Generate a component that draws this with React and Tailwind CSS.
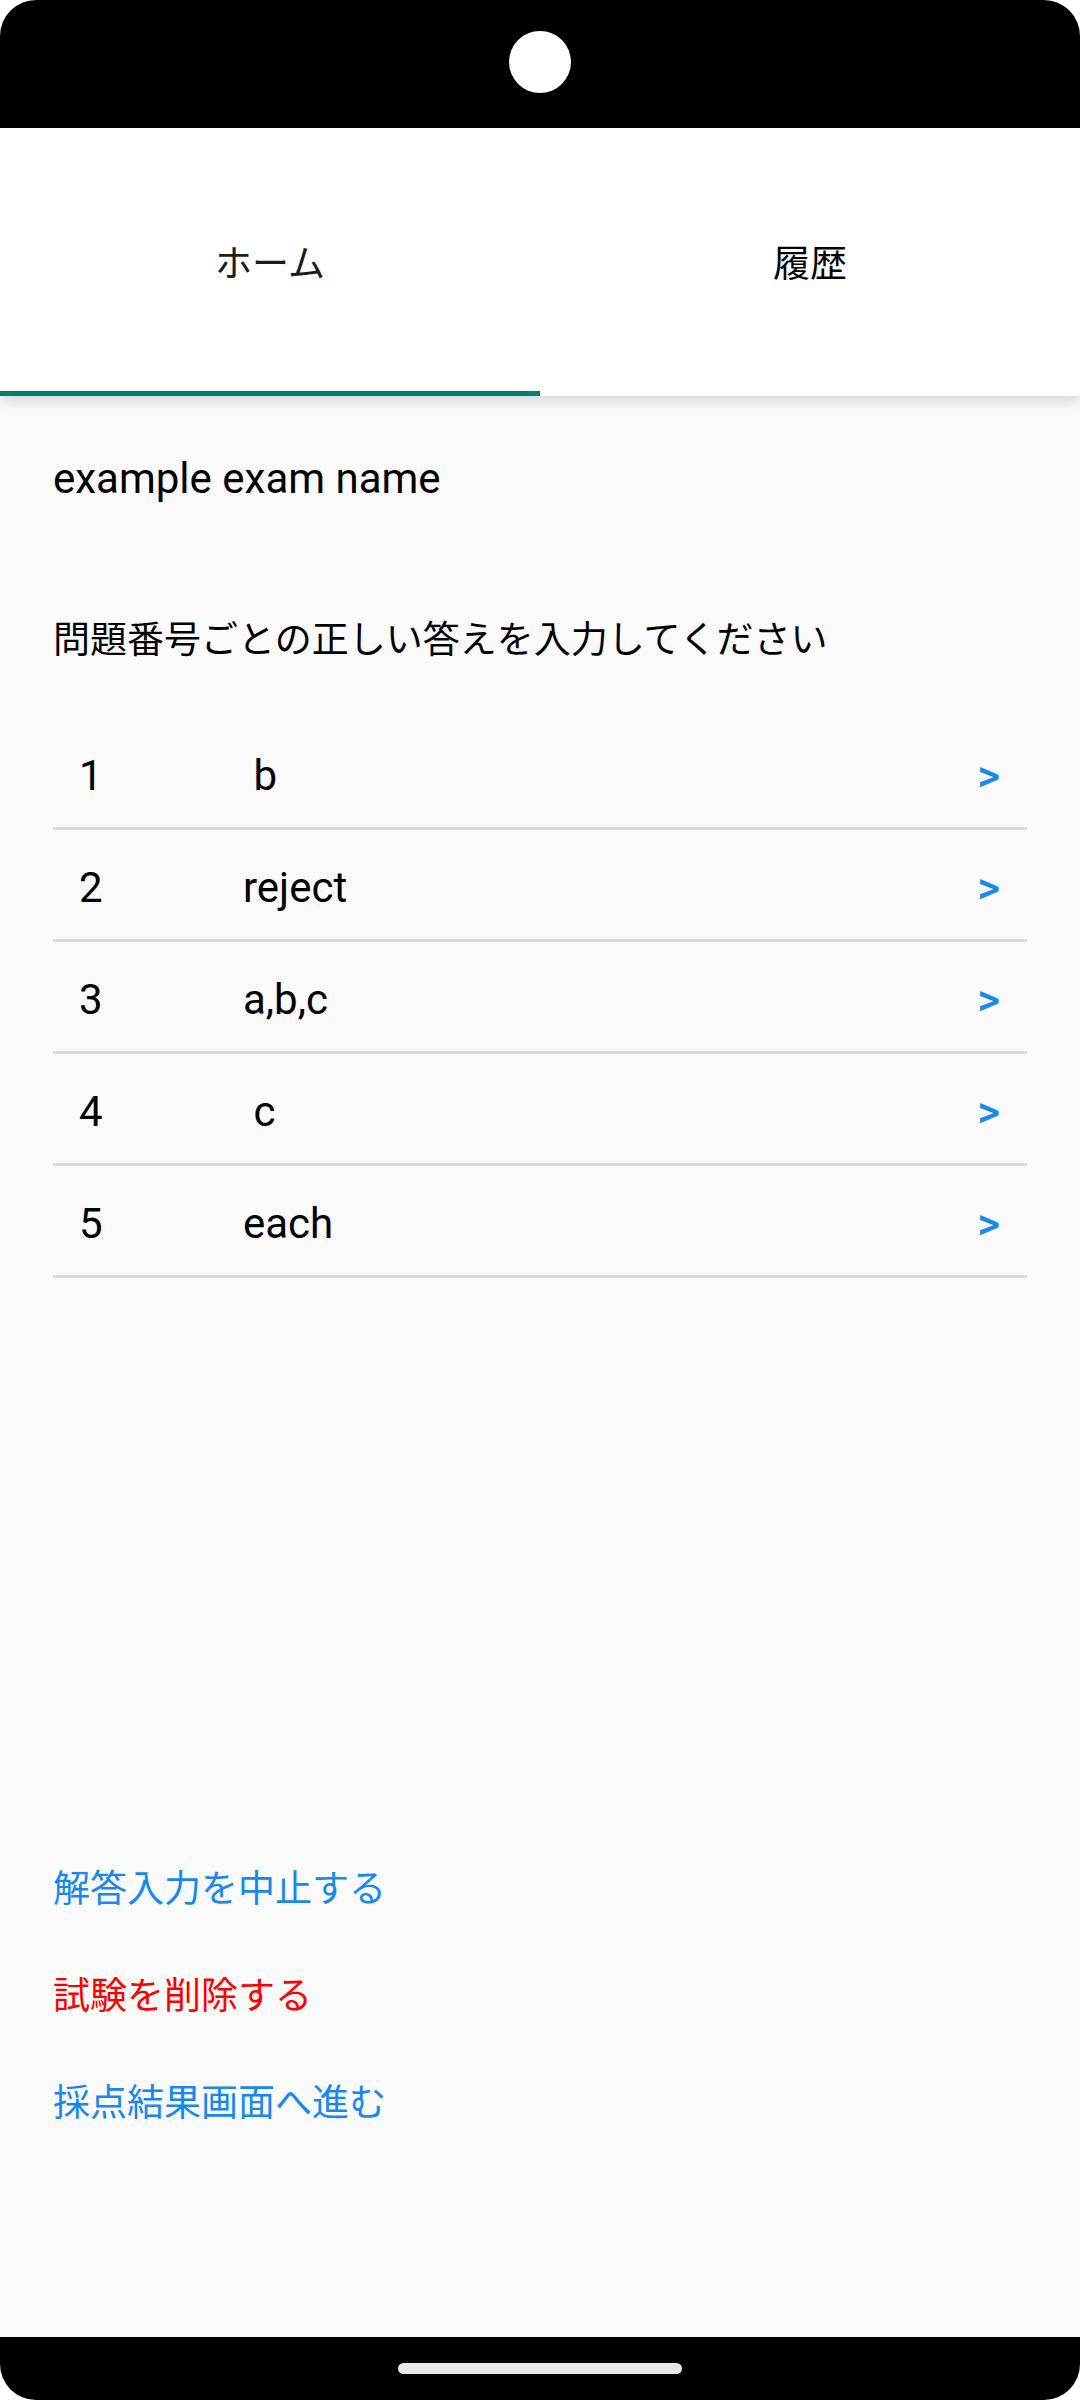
const answers = [
  { no: "1", text: " b" },
  { no: "2", text: "reject" },
  { no: "3", text: "a,b,c" },
  { no: "4", text: " c" },
  { no: "5", text: "each" },
];

const font = { fontFamily: "Roboto, 'Noto Sans CJK JP', sans-serif" };

export default function App() {
  return (
    <div className="w-[1080px] h-[2400px] bg-white">
      <div
        className="w-full h-full bg-black rounded-[36px] overflow-hidden flex flex-col"
        style={font}
      >
        {/* status bar / camera */}
        <div className="h-[128px] shrink-0 flex justify-center pt-[31px]">
          <div className="w-[62px] h-[62px] rounded-full bg-white"></div>
        </div>

        {/* tabs */}
        <div className="relative z-10 h-[268px] shrink-0 bg-white flex shadow-[0_4px_14px_rgba(0,0,0,0.16)]">
          <div className="flex-1 flex flex-col">
            <div className="flex-1 flex items-center justify-center text-[37px] leading-[50px] text-[#1c1c1c] pt-[10px]">
              ホーム
            </div>
            <div className="h-[5px] bg-[#00806e]"></div>
          </div>
          <div className="flex-1 flex flex-col">
            <div className="flex-1 flex items-center justify-center text-[37px] leading-[50px] text-black pt-[10px]">
              履歴
            </div>
            <div className="h-[5px]"></div>
          </div>
        </div>

        {/* content */}
        <div className="flex-1 bg-[#fafafa] px-[53px] flex flex-col">
          <p className="mt-[58px] text-[42px] leading-[49px] text-black">example exam name</p>

          <p className="mt-[113px] text-[37px] leading-[50px] text-black">
            問題番号ごとの正しい答えを入力してください
          </p>

          <div className="mt-[52px] flex flex-col">
            {answers.map((a) => (
              <div
                key={a.no}
                className="h-[112px] border-b-[3px] border-[#d9d9d9] flex items-center pl-[26px] pr-[27px] pt-[6px]"
              >
                <span className="w-[164px] text-[42px] leading-[49px] text-black">{a.no}</span>
                <span className="flex-1 text-[42px] leading-[49px] text-black whitespace-pre">{a.text}</span>
                <span className="text-[44px] leading-[44px] font-medium text-[#1888ee]">&gt;</span>
              </div>
            ))}
          </div>

          <div className="mt-auto pb-[180px] flex flex-col">
            <div className="h-[107px] flex items-center text-[37px] text-[#1888ee]">解答入力を中止する</div>
            <div className="h-[107px] flex items-center text-[37px] text-[#ff0000]">試験を削除する</div>
            <div className="h-[107px] flex items-center text-[37px] text-[#1888ee]">採点結果画面へ進む</div>
          </div>
        </div>

        {/* nav bar */}
        <div className="h-[63px] shrink-0 flex justify-center pt-[26px]">
          <div className="w-[284px] h-[11px] rounded-full bg-[#e8e8e8]"></div>
        </div>
      </div>
    </div>
  );
}
